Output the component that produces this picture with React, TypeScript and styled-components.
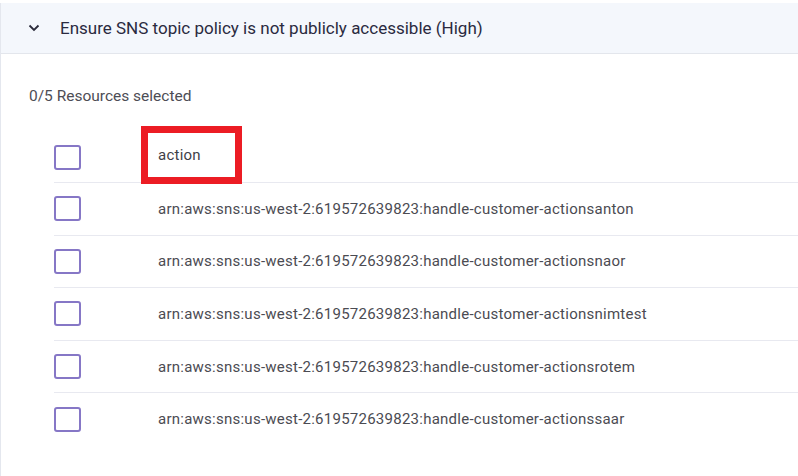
import styled, { createGlobalStyle } from 'styled-components'

const GlobalStyle = createGlobalStyle`
  html, body {
    margin: 0;
    padding: 0;
    background: #ffffff;
  }
  body {
    font-family: Roboto, "Liberation Sans", Arial, sans-serif;
  }
`

const Panel = styled.section`
  margin-top: 3px;
  border-left: 1px solid #e4e7ee;
  height: 473px;
  box-sizing: border-box;
`

const Header = styled.div`
  display: flex;
  align-items: center;
  gap: 20px;
  height: 50px;
  padding-left: 27px;
  background: #f4f7fc;
  border-bottom: 1px solid #e3e6ec;
`

const Title = styled.h3`
  margin: 0;
  font-size: 17px;
  font-weight: 400;
  color: #2a2a40;
`

const Body = styled.div`
  padding: 33px 0 0 28px;
`

const Count = styled.div`
  font-size: 15.5px;
  line-height: 18px;
  color: #4d4d55;
`

const Table = styled.div`
  margin: 27px 0 0 25px;
`

const Row = styled.div<{ $last?: boolean; $head?: boolean }>`
  display: grid;
  grid-template-columns: 104px 1fr;
  align-items: center;
  height: ${p => (p.$head ? 51 : 52.6)}px;
  border-bottom: 1px solid ${p => (p.$last ? 'transparent' : '#e8e9f0')};
  box-sizing: border-box;
`

const Box = styled.span`
  width: 27px;
  height: 25px;
  box-sizing: border-box;
  border: 2px solid #8677c6;
  border-radius: 3px;
  background: #fff;
`

const Cell = styled.span`
  font-size: 15px;
  line-height: 18px;
  color: #4b4b52;
  letter-spacing: 0.25px;
  white-space: nowrap;
`

const Marked = styled.span`
  position: relative;
  display: inline-block;
  color: #3f3f48;
  transform: translateY(-2px);

  &::after {
    content: '';
    position: absolute;
    left: -17px;
    top: -20px;
    width: 101px;
    height: 58px;
    box-sizing: border-box;
    border: 7px solid #ec1c24;
  }
`

function Chevron() {
  return (
    <svg width="12" height="8" viewBox="0 0 12 8">
      <path d="M1.5 1.5 L6 6 L10.5 1.5" fill="none" stroke="#2a2a3a" strokeWidth="1.8" />
    </svg>
  )
}

const resources = [
  'arn:aws:sns:us-west-2:619572639823:handle-customer-actionsanton',
  'arn:aws:sns:us-west-2:619572639823:handle-customer-actionsnaor',
  'arn:aws:sns:us-west-2:619572639823:handle-customer-actionsnimtest',
  'arn:aws:sns:us-west-2:619572639823:handle-customer-actionsrotem',
  'arn:aws:sns:us-west-2:619572639823:handle-customer-actionssaar',
]

export default function App() {
  return (
    <>
      <GlobalStyle />
      <Panel>
        <Header>
          <Chevron />
          <Title>Ensure SNS topic policy is not publicly accessible (High)</Title>
        </Header>
        <Body>
          <Count>0/5 Resources selected</Count>
          <Table>
            <Row $head>
              <Box />
              <Cell>
                <Marked>action</Marked>
              </Cell>
            </Row>
            {resources.map((r, i) => (
              <Row key={r} $last={i === resources.length - 1}>
                <Box />
                <Cell>{r}</Cell>
              </Row>
            ))}
          </Table>
        </Body>
      </Panel>
    </>
  )
}
